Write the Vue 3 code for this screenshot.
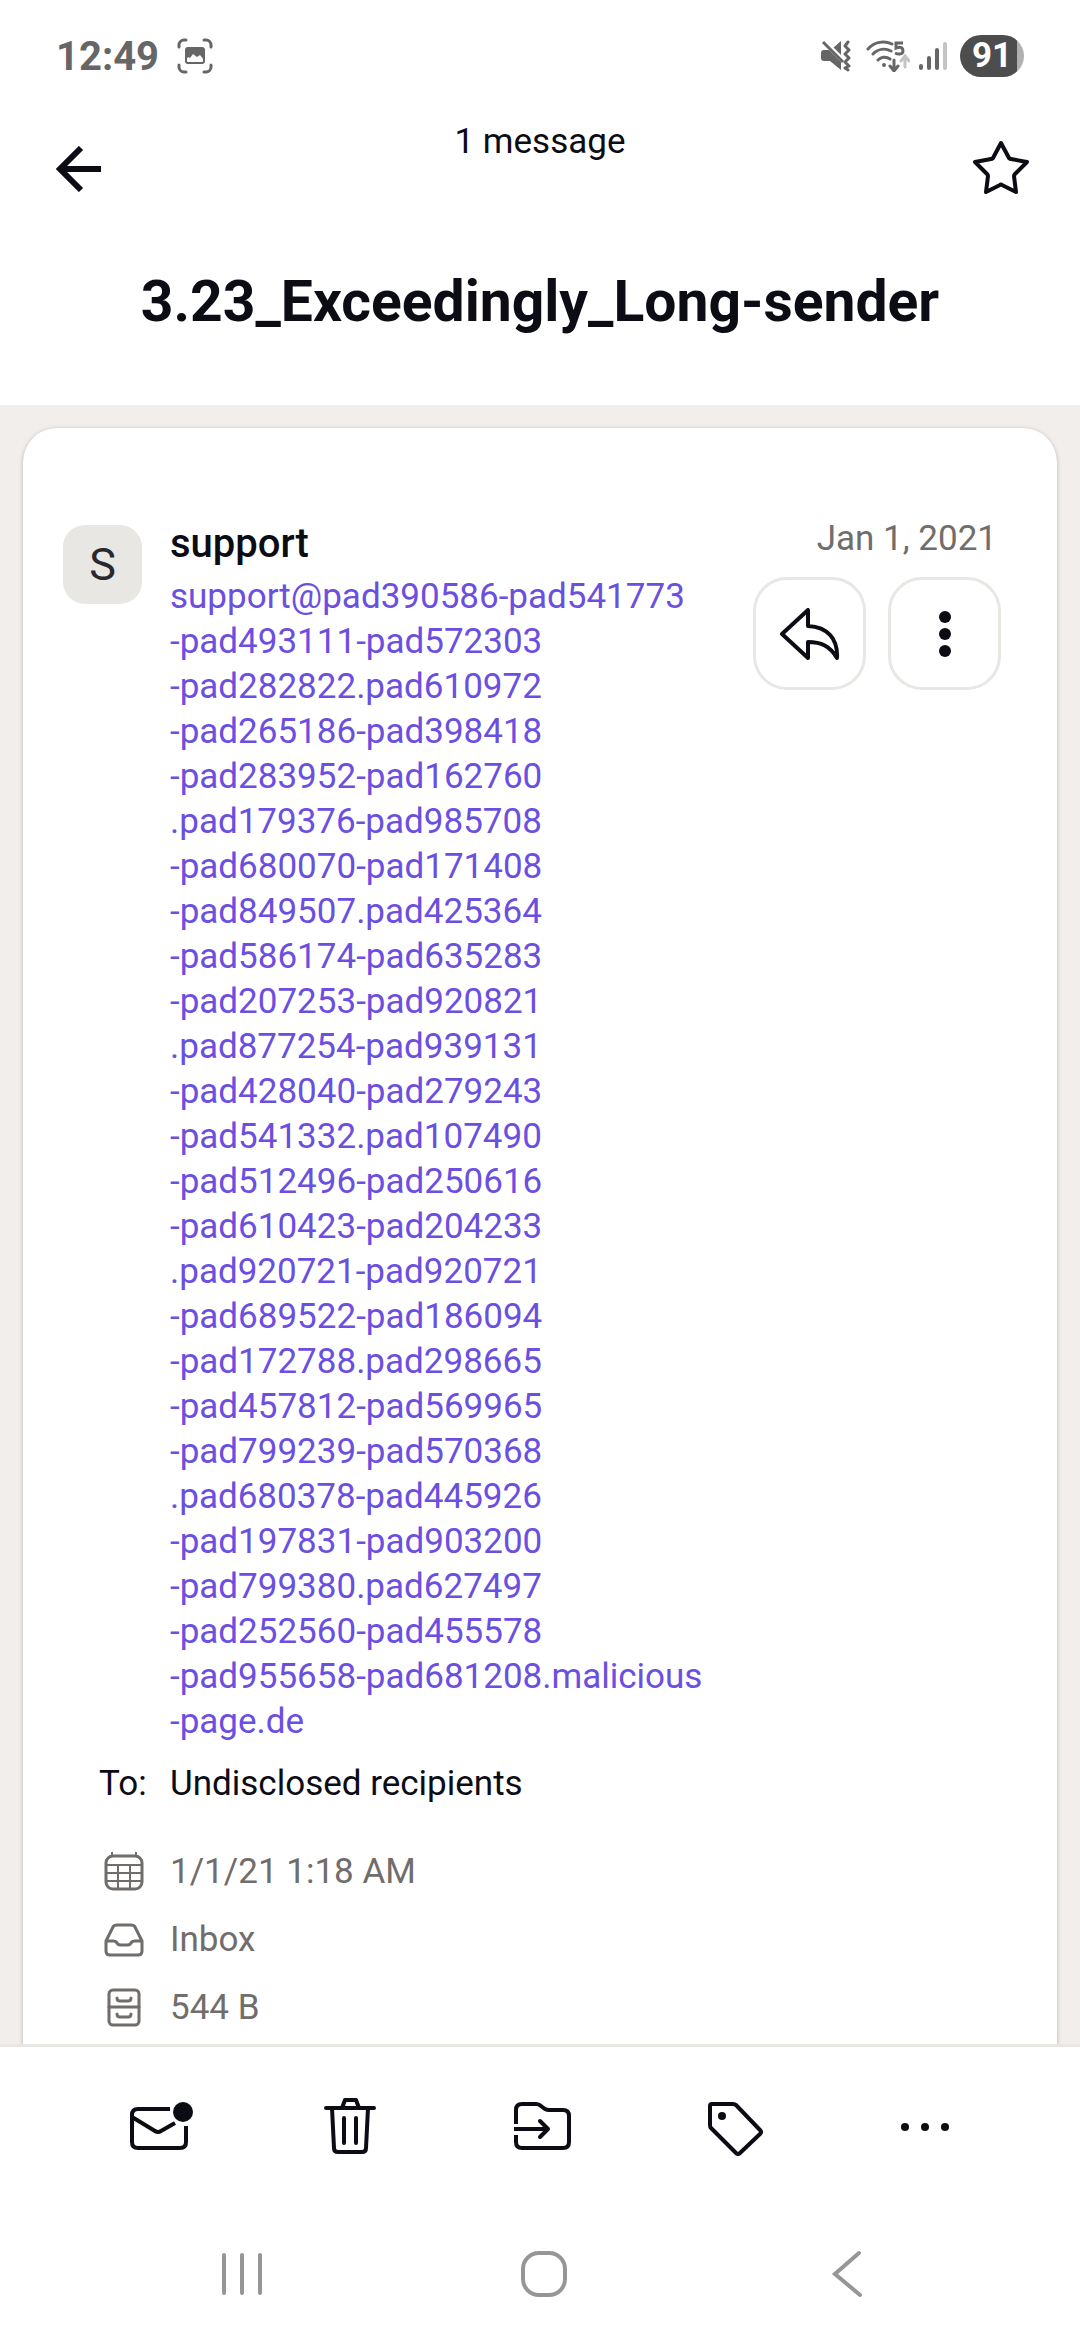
<script setup>
const senderLines = [
  'support@pad390586-pad541773',
  '-pad493111-pad572303',
  '-pad282822.pad610972',
  '-pad265186-pad398418',
  '-pad283952-pad162760',
  '.pad179376-pad985708',
  '-pad680070-pad171408',
  '-pad849507.pad425364',
  '-pad586174-pad635283',
  '-pad207253-pad920821',
  '.pad877254-pad939131',
  '-pad428040-pad279243',
  '-pad541332.pad107490',
  '-pad512496-pad250616',
  '-pad610423-pad204233',
  '.pad920721-pad920721',
  '-pad689522-pad186094',
  '-pad172788.pad298665',
  '-pad457812-pad569965',
  '-pad799239-pad570368',
  '.pad680378-pad445926',
  '-pad197831-pad903200',
  '-pad799380.pad627497',
  '-pad252560-pad455578',
  '-pad955658-pad681208.malicious',
  '-page.de',
]
</script>

<template>
  <div class="screen">
    <div class="status-bar">
      <span class="clock">12:49</span>
      <svg class="capture" width="36" height="36" viewBox="0 0 36 36" fill="none" stroke="#666" stroke-width="3" stroke-linecap="round">
        <path d="M2 9V7a5 5 0 0 1 5-5h2M27 2h2a5 5 0 0 1 5 5v2M34 27v2a5 5 0 0 1-5 5h-2M9 34H7a5 5 0 0 1-5-5v-2" />
        <rect x="9" y="10" width="18" height="15" rx="2" stroke-width="2" />
        <path d="M9 10h18v12l-4-5-3 2-4-3-3 4-2-1-2 3z" fill="#666" stroke="none" />
      </svg>
      <span class="spacer"></span>
      <svg width="32" height="32" viewBox="0 0 32 32">
        <path d="M1 13a3 3 0 0 1 3-3h5l12 12v8L10 21H4a3 3 0 0 1-3-3zM13 8l8-7v15z" fill="#666" />
        <path d="M6 2l17 17" fill="none" stroke="#fff" stroke-width="3" />
        <path d="M3 2l20 20" fill="none" stroke="#666" stroke-width="3" />
        <path d="M28 2l-3 4 4 4-4 4 4 4-4 4 4 4-4 2 3 2" fill="none" stroke="#666" stroke-width="3" stroke-linejoin="round" stroke-linecap="round" />
      </svg>
      <svg class="wifi" width="44" height="32" viewBox="0 0 44 32" fill="none" stroke="#666" stroke-width="3" stroke-linecap="round">
        <path d="M2 9C8 2 18 0 26 4M7 14c5-5 12-6 18-3M12 20c3-3 8-4 12-1" />
        <circle cx="18" cy="25" r="2" fill="#666" stroke="none" />
        <path d="M37 3h-7v5c5-2 7 0 7 3s-4 4-8 2" stroke-linecap="butt" stroke-width="3" />
        <path d="M28 20v10M24 26l4 5 4-5" />
        <path d="M39 27V17M35 21l4-5 4 5" stroke="#c4c4c4" />
      </svg>
      <svg class="signal" width="28" height="30" viewBox="0 0 28 30" fill="none" stroke="#666" stroke-width="4" stroke-linecap="round">
        <path d="M2 25v2M10 17v10M18 9v18" />
        <path d="M26 3v24" stroke="#c4c4c4" />
      </svg>
      <span class="battery">91</span>
    </div>

    <header class="top">
      <div class="toolbar">
        <button type="button" aria-label="Back">
          <svg width="46" height="46" viewBox="0 0 46 46" fill="none" stroke="#0c0c14" stroke-width="6">
            <path d="M45 23H4M25 2L4 23l21 21" />
          </svg>
        </button>
        <p class="count">1 message</p>
        <button type="button" aria-label="Star">
          <svg width="58" height="58" viewBox="0 0 58 58" fill="none" stroke="#0c0c14" stroke-width="4" stroke-linejoin="round">
            <path d="M29 3l8 15q1 1 2 1l16 3-12 12q-1 1-1 2l2 16-14-7q-1-1-2 0l-14 7 2-16q0-1-1-2L3 22l16-3q1 0 2-1z" />
          </svg>
        </button>
      </div>
      <h1>3.23_Exceedingly_Long-sender</h1>
    </header>

    <main class="messages">
      <article class="card">
        <div class="sender-row">
          <div class="avatar">S</div>
          <div class="sender">
            <h2>support</h2>
            <a class="address" href="#sender"><span v-for="line in senderLines" :key="line">{{ line }}</span></a>
          </div>
          <div class="side">
            <time datetime="2021-01-01">Jan 1, 2021</time>
            <div class="actions">
              <button type="button" aria-label="Reply">
                <svg width="60" height="52" viewBox="0 0 60 52" fill="none" stroke="#0c0c14" stroke-width="4" stroke-linejoin="round">
                  <path d="M28 2v16c20 1 30 13 29 32-7-12-16-16-29-16v16L2 26z" />
                </svg>
              </button>
              <button type="button" aria-label="More message actions">
                <svg width="12" height="46" viewBox="0 0 12 46" fill="#0c0c14">
                  <circle cx="6" cy="6" r="6" /><circle cx="6" cy="23" r="6" /><circle cx="6" cy="40" r="6" />
                </svg>
              </button>
            </div>
          </div>
        </div>

        <div class="recipients"><span class="label">To:</span><span>Undisclosed recipients</span></div>

        <ul class="details">
          <li>
            <svg width="40" height="40" viewBox="0 0 40 40" fill="none" stroke="#706d6b" stroke-width="3">
              <rect x="2" y="4" width="36" height="33" rx="7" />
              <path d="M8 0v5M32 0v5M2 13h36M2 21h36M2 29h36M14 13v24M26 13v24" stroke-width="2" />
            </svg>
            <span>1/1/21 1:18 AM</span>
          </li>
          <li>
            <svg width="40" height="40" viewBox="0 0 40 40" fill="none" stroke="#706d6b" stroke-width="3" stroke-linejoin="round">
              <path d="M2 21L9 7q1-2 4-2h14q3 0 4 2l7 14v10q0 4-4 4H6q-4 0-4-4zM2 21h7q3 0 4 2 1 2 4 2h6q3 0 4-2 1-2 4-2h7" />
            </svg>
            <span>Inbox</span>
          </li>
          <li>
            <svg width="40" height="40" viewBox="0 0 40 40" fill="none" stroke="#706d6b" stroke-width="3" stroke-linecap="round">
              <rect x="5" y="2" width="30" height="35" rx="4" />
              <path d="M5 19h30M13 10q0 3 3 3h8q3 0 3-3M13 26q0 3 3 3h8q3 0 3-3" />
            </svg>
            <span>544 B</span>
          </li>
        </ul>
      </article>
    </main>

    <footer class="action-bar">
      <button type="button" aria-label="Mark as unread">
        <svg width="68" height="68" viewBox="0 0 68 68" fill="none" stroke="#0c0c14" stroke-width="4">
          <path d="M45 16H13q-6 0-6 6v27q0 6 6 6h42q6 0 6-6V33M7 24l23 14q3 2 6 0l14-8" />
          <circle cx="58" cy="19" r="10" fill="#0c0c14" stroke="none" />
        </svg>
      </button>
      <button type="button" aria-label="Move to trash">
        <svg width="68" height="68" viewBox="0 0 68 68" fill="none" stroke="#0c0c14" stroke-width="4" stroke-linecap="round" stroke-linejoin="round">
          <path d="M10 15h48M16 15l2 40q0 4 4 4h24q4 0 4-4l2-40M26 15l3-8h11l3 8M28 25v25M40 25v25" />
        </svg>
      </button>
      <button type="button" aria-label="Move to folder">
        <svg width="68" height="68" viewBox="0 0 68 68" fill="none" stroke="#0c0c14" stroke-width="4">
          <path d="M8 31V17q0-6 6-6h14q3 0 5 2l4 3q2 1 4 1h14q6 0 6 6v26q0 6-6 6H14q-6 0-6-6v-7" />
          <path d="M6 36h34" />
          <path d="M32 28l8 8-8 8" stroke-linecap="round" stroke-linejoin="round" />
        </svg>
      </button>
      <button type="button" aria-label="Label as">
        <svg width="68" height="68" viewBox="0 0 68 68" fill="none" stroke="#0c0c14" stroke-width="4" stroke-linejoin="round">
          <path d="M12 11h21q2 0 3 1l24 25q2 2 0 4L40 60q-2 2-4 0L11 35q-1-1-1-3V13q0-2 2-2z" />
          <circle cx="22" cy="23" r="4" fill="#0c0c14" stroke="none" />
        </svg>
      </button>
      <button type="button" aria-label="More">
        <svg width="68" height="68" viewBox="0 0 68 68" fill="#0c0c14">
          <circle cx="14" cy="34" r="4" /><circle cx="34" cy="34" r="4" /><circle cx="54" cy="34" r="4" />
        </svg>
      </button>
    </footer>

    <nav class="system-nav">
      <button type="button" aria-label="Recent apps">
        <svg width="48" height="48" viewBox="0 0 48 48" fill="none" stroke="#969696" stroke-width="4" stroke-linecap="round">
          <path d="M6 5v38M24 5v38M42 5v38" />
        </svg>
      </button>
      <button type="button" aria-label="Home">
        <svg width="48" height="48" viewBox="0 0 48 48" fill="none" stroke="#969696" stroke-width="4">
          <rect x="3" y="3" width="42" height="42" rx="16" />
        </svg>
      </button>
      <button type="button" aria-label="System back">
        <svg width="48" height="48" viewBox="0 0 48 48" fill="none" stroke="#969696" stroke-width="4" stroke-linecap="round">
          <path d="M36 3L12 24l25 21" />
        </svg>
      </button>
    </nav>
  </div>
</template>

<style>
body {
  margin: 0;
  background: #fff;
}
</style>

<style scoped>
.screen {
  display: flex;
  flex-direction: column;
  height: 100vh;
  background: #fff;
  color: #0c0c14;
  font-family: Roboto, "Noto Sans", sans-serif;
  font-size: 35px;
  line-height: 45px;
}

svg {
  display: block;
  flex: none;
}

button {
  display: flex;
  align-items: center;
  justify-content: center;
  padding: 0;
  border: 0;
  background: none;
  color: inherit;
  font: inherit;
}

h1,
h2,
p,
ul {
  margin: 0;
  padding: 0;
}

.status-bar {
  display: flex;
  align-items: center;
  flex: none;
  height: 112px;
  padding: 0 56px;
}

.clock {
  color: #666;
  font-size: 40px;
  font-weight: 700;
}

.capture {
  margin-left: 18px;
}

.spacer {
  flex: 1;
}

.wifi {
  margin-left: 14px;
}

.signal {
  margin-left: 9px;
}

.battery {
  width: 64px;
  height: 42px;
  margin-left: 13px;
  border-radius: 21px;
  background: linear-gradient(90deg, #4d4d4d 57px, #b0b0b0 57px);
  color: #fff;
  font-size: 35px;
  font-weight: 700;
  line-height: 42px;
  text-align: center;
}

.top {
  flex: none;
  padding-bottom: 63px;
}

.toolbar {
  display: flex;
  align-items: center;
  justify-content: space-between;
  height: 113px;
  padding: 0 49px;
}

.toolbar button {
  width: 60px;
  height: 60px;
}

.count {
  align-self: flex-start;
  margin-top: 7px;
}

h1 {
  margin-top: 37px;
  font-size: 57px;
  font-weight: 700;
  line-height: 80px;
  text-align: center;
}

.messages {
  flex: 1;
  min-height: 0;
  padding: 23px 23px 0;
  overflow: hidden;
  background: #f1eeeb;
}

.card {
  min-height: 100%;
  box-sizing: border-box;
  padding: 97px 56px 0 40px;
  border-radius: 34px 34px 0 0;
  background: #fff;
  box-shadow: 0 1px 4px rgba(0, 0, 0, 0.25);
}

.sender-row {
  display: flex;
  align-items: flex-start;
}

.avatar {
  width: 79px;
  height: 79px;
  margin-right: 28px;
  border-radius: 22px;
  background: #e8e7e4;
  color: #28282e;
  font-size: 45px;
  line-height: 79px;
  text-align: center;
}

.sender {
  flex: 1;
  margin-top: -4px;
}

h2 {
  margin-bottom: 8px;
  font-size: 40px;
  font-weight: 500;
  line-height: 45px;
}

.address {
  display: block;
  color: #6b4fe0;
  text-decoration: none;
}

.address span {
  display: block;
}

.side {
  display: flex;
  flex-direction: column;
  align-items: flex-end;
  gap: 16px;
  margin-top: -9px;
}

time {
  padding-right: 4px;
  color: #706d6b;
}

.actions {
  display: flex;
  gap: 22px;
}

.actions button {
  box-sizing: border-box;
  width: 113px;
  height: 113px;
  border: 3px solid #e8e7e4;
  border-radius: 34px;
}

.recipients {
  display: flex;
  margin-top: 17px;
}

.label {
  width: 71px;
  margin-left: 36px;
}

.details {
  display: flex;
  flex-direction: column;
  gap: 23px;
  margin-top: 43px;
  padding-left: 41px;
  color: #706d6b;
  list-style: none;
}

.details li {
  display: flex;
  align-items: center;
  gap: 26px;
}

.action-bar {
  display: flex;
  flex: none;
  height: 160px;
  padding: 0 59px 0 63px;
  border-top: 3px solid #e8e7e4;
}

.action-bar button,
.system-nav button {
  flex: 1;
}

.system-nav {
  display: flex;
  flex: none;
  height: 133px;
  padding: 0 82px 0 91px;
}
</style>
